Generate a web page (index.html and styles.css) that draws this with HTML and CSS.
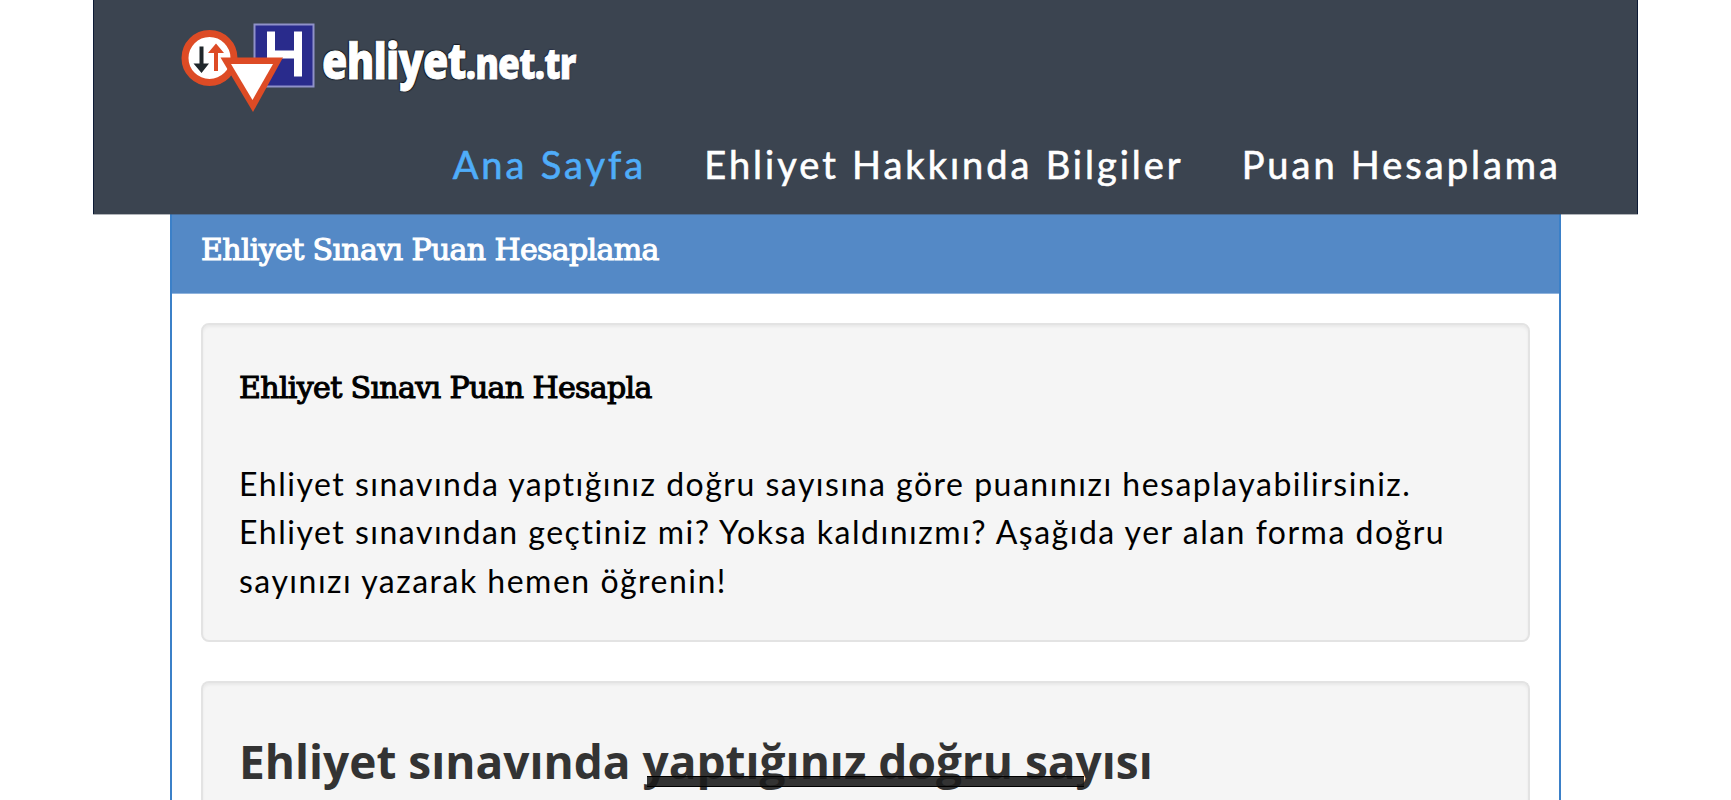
FILE: index.html
```html
<!DOCTYPE html>
<html lang="tr">
<head>
    <meta charset="UTF-8">
    <meta name="viewport" content="width=device-width, initial-scale=1.0">
    <title>Ehliyet Sınavı Puan Hesaplama</title>
    <link rel="stylesheet" href="styles.css">
</head>
<body>
    <header class="header">
        <a href="#" class="logo">
            <svg width="141" height="104" viewBox="0 0 141 104">
                <!-- parking sign -->
                <rect x="73.5" y="14.5" width="59" height="62" fill="#292b8c" stroke="#8f91c8" stroke-width="2"/>
                <path d="M90 21.5V44.5H117M117 21.5V66.5" fill="none" stroke="#fff" stroke-width="8"/>
                <!-- two way traffic sign -->
                <circle cx="28.5" cy="48" r="24.5" fill="#fff" stroke="#dd4b25" stroke-width="7"/>
                <path d="M18.5 36.5h4v17h5.5l-7.5 9.5l-8-9.5h6z" fill="#20272b"/>
                <path d="M33 61h4V43h6l-8-9.5l-8 9.5h6z" fill="#dd4b25"/>
                <!-- yield sign -->
                <path d="M39.5 47.5H102L72 102z" fill="#dd4b25"/>
                <path d="M50 54H92L71.5 90z" fill="#fff"/>
            </svg>
            <span class="logo-name">ehliyet<span class="logo-domain">.net.tr</span></span>
        </a>
        <nav class="menu">
            <a href="#" class="active">Ana Sayfa</a>
            <a href="#">Ehliyet Hakkında Bilgiler</a>
            <a href="#">Puan Hesaplama</a>
        </nav>
    </header>

    <main class="panel">
        <div class="panel-heading">
            <h1>Ehliyet Sınavı Puan Hesaplama</h1>
        </div>
        <div class="panel-body">
            <section class="well">
                <h2>Ehliyet Sınavı Puan Hesapla</h2>
                <p>
                    Ehliyet sınavında yaptığınız doğru sayısına göre puanınızı hesaplayabilirsiniz.<br>
                    Ehliyet sınavından geçtiniz mi? Yoksa kaldınızmı? Aşağıda yer alan forma doğru<br>
                    sayınızı yazarak hemen öğrenin!
                </p>
            </section>
            <section class="well">
                <h3>Ehliyet sınavında <span class="underlined">yaptığınız doğru say</span>ısı</h3>
            </section>
        </div>
    </main>
</body>
</html>
```
FILE: styles.css
```css
* {
    margin: 0;
    padding: 0;
    box-sizing: border-box;
}

body {
    background: #fff;
    color: #000;
    font-family: Lato, sans-serif;
}

.header {
    position: relative;
    width: 1545px;
    height: 214px;
    margin: 0 auto;
    padding: 10px 76px 0 87px;
    background: #3b4450;
    border-left: 1px solid #0c1a35;
    border-right: 1px solid #0c1a35;
    box-shadow: 0 1px 0 rgba(59, 68, 80, 0.4);
}

.logo {
    display: flex;
    height: 104px;
    text-decoration: none;
}

.logo svg {
    flex: none;
}

.logo-name {
    padding-top: 15px;
    color: #fff;
    font-family: "Open Sans", sans-serif;
    font-weight: 800;
    font-size: 50px;
    line-height: 70px;
    letter-spacing: -1px;
    white-space: nowrap;
    transform: scaleX(0.825);
    transform-origin: left;
    -webkit-text-stroke: 0.8px #fff;
    text-shadow: 1px 1px 1px #11151a, -1px -1px 1px #11151a, 1px -1px 1px #11151a, -1px 1px 1px #11151a;
}

.logo-domain {
    font-size: 43px;
    text-shadow: 1px 1px 1px #1c2540, -1px -1px 1px #1c2540;
}

.menu {
    display: flex;
    justify-content: flex-end;
    gap: 58px;
    padding-top: 27px;
}

.menu a {
    color: #fff;
    font-size: 38px;
    line-height: 46px;
    letter-spacing: 3px;
    word-spacing: 0.5px;
    text-decoration: none;
    white-space: nowrap;
    -webkit-text-stroke: 0.6px currentColor;
}

.menu .active {
    color: #4fadf9;
}

.panel {
    width: 1391px;
    height: 586px;
    margin: 0 auto;
    border: 2px solid #3b80c8;
    border-top: none;
    border-bottom: none;
    overflow: hidden;
}

.panel-heading {
    height: 80px;
    padding: 15px 29px;
    background: #5489c6;
    border-bottom: 1px solid #8fb3dd;
    color: #fff;
}

h1,
h2 {
    font-family: "DejaVu Serif", serif;
    font-weight: normal;
    font-size: 30px;
    line-height: 42px;
    letter-spacing: -0.65px;
    white-space: nowrap;
    -webkit-text-stroke: 1.1px currentColor;
}

.panel-body {
    padding: 29px 29px 0;
}

.well {
    height: 319px;
    margin-bottom: 39px;
    padding: 42px 36px;
    background: #f5f5f5;
    border: 2px solid #e3e3e3;
    border-radius: 8px;
    box-shadow: inset 0 2px 3px rgba(0, 0, 0, 0.05);
}

.well:last-child {
    height: 140px;
    margin-bottom: 0;
    padding-top: 48px;
    border-bottom: none;
    border-radius: 8px 8px 0 0;
}

.well p {
    margin-top: 51px;
    font-size: 32px;
    line-height: 48.4px;
    letter-spacing: 1.5px;
    white-space: nowrap;
}

h3 {
    font-family: "Open Sans", sans-serif;
    font-weight: 700;
    font-size: 46px;
    line-height: 60px;
    color: #333;
    white-space: nowrap;
}

.underlined {
    position: relative;
}

/* bar lies over the descenders */
.underlined::after {
    content: "";
    position: absolute;
    left: 4px;
    right: 18px;
    top: 46px;
    height: 9px;
    background: rgba(27, 27, 27, 0.89);
    border-top: 1px solid #000;
    border-bottom: 1px solid #000;
}
```
